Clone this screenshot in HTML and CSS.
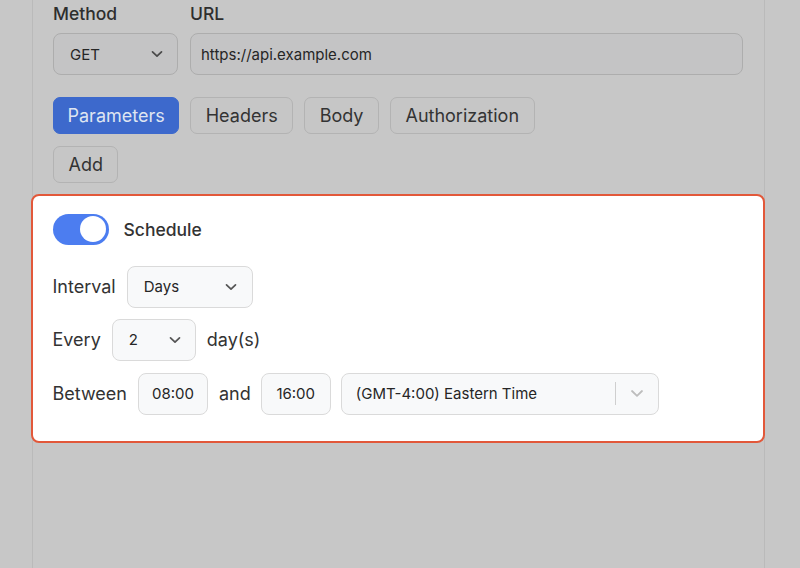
FILE: index.html
```html
<!DOCTYPE html>
<html>
<head>
<meta charset="utf-8">
<link rel="stylesheet" href="styles.css">
</head>
<body>
<div class="panel">
  <div class="req">
    <div class="lbl">Method</div>
    <div class="lbl">URL</div>
    <div class="field sel">
      <span>GET</span>
      <svg class="chev" width="12" height="8" viewBox="0 0 12 8"><path d="M1.5 1.8 6 6.2 10.5 1.8" fill="none" stroke="currentColor" stroke-width="1.7" stroke-linecap="round" stroke-linejoin="round"/></svg>
    </div>
    <div class="field url"><span>https://api.example.com</span></div>
  </div>
  <div class="tabs">
    <button class="tab active">Parameters</button>
    <button class="tab">Headers</button>
    <button class="tab">Body</button>
    <button class="tab">Authorization</button>
  </div>
  <div class="tabs add-row">
    <button class="tab">Add</button>
  </div>
  <section class="sched">
    <div class="row toggle-row">
      <span class="toggle"><span class="knob"></span></span>
      <span class="sched-title">Schedule</span>
    </div>
    <div class="row interval-row">
      <span class="txt">Interval</span>
      <div class="box-sel days">
        <span>Days</span>
        <svg class="chev" width="12" height="8" viewBox="0 0 12 8"><path d="M1.5 1.8 6 6.2 10.5 1.8" fill="none" stroke="currentColor" stroke-width="1.7" stroke-linecap="round" stroke-linejoin="round"/></svg>
      </div>
    </div>
    <div class="row">
      <span class="txt">Every</span>
      <div class="box-sel num">
        <span>2</span>
        <svg class="chev" width="12" height="8" viewBox="0 0 12 8"><path d="M1.5 1.8 6 6.2 10.5 1.8" fill="none" stroke="currentColor" stroke-width="1.7" stroke-linecap="round" stroke-linejoin="round"/></svg>
      </div>
      <span class="txt">day(s)</span>
    </div>
    <div class="row between-row">
      <span class="txt">Between</span>
      <div class="box-sel time"><span>08:00</span></div>
      <span class="txt and">and</span>
      <div class="box-sel time"><span>16:00</span></div>
      <div class="box-sel tz">
        <span class="tz-text">(GMT-4:00) Eastern Time</span>
        <span class="sep"></span>
        <svg class="chev light" width="14" height="9" viewBox="0 0 14 9"><path d="M2 2 7 6.8 12 2" fill="none" stroke="currentColor" stroke-width="1.8" stroke-linecap="round" stroke-linejoin="round"/></svg>
      </div>
    </div>
  </section>
</div>
</body>
</html>
```

FILE: styles.css
```css
* { box-sizing: border-box; }
html, body { margin: 0; height: 100%; }
body {
  background: #c7c7c7;
  font-family: Inter, "Noto Sans", sans-serif;
  color: #303030;
  overflow: hidden;
}
.panel {
  margin-left: 32px;
  width: 733px;
  height: 100%;
  border-left: 1px solid #bababa;
  border-right: 1px solid #bababa;
  padding: 3px 20px 0;
}
.req {
  display: grid;
  grid-template-columns: 125px 1fr;
  column-gap: 12px;
  row-gap: 8px;
  margin-right: 1px;
}
.lbl {
  font-size: 17.5px;
  line-height: 22px;
  font-weight: 500;
  color: #2e2e2e;
}
.field {
  height: 42px;
  border: 1px solid #adadad;
  border-radius: 8px;
  background: #c4c4c5;
  display: flex;
  align-items: center;
  font-size: 15px;
  color: #262626;
}
.field.sel { padding: 0 14px 0 16px; justify-content: space-between; }
.field.url { padding: 0 10px; }
.chev { color: #4a4a4a; display: block; }
.tabs {
  display: flex;
  gap: 11px;
  margin-top: 22px;
}
.add-row { margin-top: 12px; }
.tab {
  height: 37px;
  padding: 0 14.5px;
  font: inherit;
  font-size: 18px;
  color: #333;
  background: #c6c6c6;
  border: 1px solid #b3b3b3;
  border-radius: 7px;
}
.tab.active {
  padding: 0 13.5px;
  background: #3d69cc;
  border-color: #3d69cc;
  color: #dfe5f1;
}
.sched {
  margin: 11px -21px 0 -22px;
  height: 249px;
  background: #fff;
  border: 2.5px solid #e2583a;
  border-radius: 8px;
  padding: 17.5px 20px 0 19.5px;
  display: flex;
  flex-direction: column;
  gap: 11px;
}
.row {
  display: flex;
  align-items: center;
  gap: 11px;
}
.between-row { margin-top: 1px; }
.and { margin-right: -1px; }
.between-row .tz { margin-left: -1px; }
.toggle-row { gap: 15px; margin-bottom: 10px; }
.toggle {
  width: 56px;
  height: 31px;
  border-radius: 16px;
  background: #4c7df0;
  padding: 2.5px;
  display: flex;
  justify-content: flex-end;
}
.knob {
  width: 26px;
  height: 26px;
  border-radius: 50%;
  background: #fff;
}
.sched-title { font-size: 17.5px; font-weight: 500; color: #333; }
.txt { font-size: 18px; color: #333; }
.box-sel {
  height: 42px;
  border: 1px solid #dadada;
  border-radius: 8px;
  background: #f8f9fa;
  display: flex;
  align-items: center;
  font-size: 15px;
  color: #262626;
}
.box-sel .chev { color: #555; }
.days { width: 126px; padding: 0 15px 0 16px; justify-content: space-between; }
.num { width: 84px; padding: 0 14px 0 16px; justify-content: space-between; }
.time { width: 70px; justify-content: center; }
.tz { width: 318px; padding: 0 14px 0 14px; }
.tz-text { flex: 1; }
.sep { width: 1px; height: 23px; background: #cfcfcf; margin-right: 14px; }
.chev.light { color: #bdbdbd; }
```
